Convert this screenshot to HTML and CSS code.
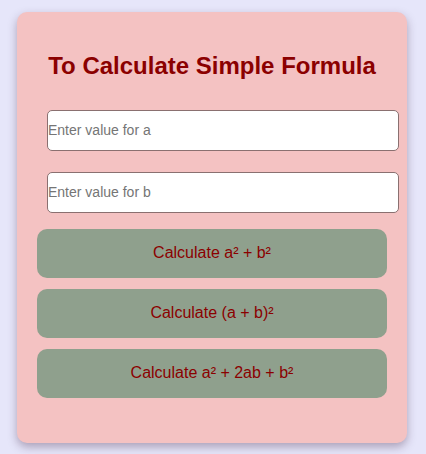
FILE: index.html
```html
<!DOCTYPE html>
<html>
<head>
<meta charset="utf-8">
<link rel="stylesheet" href="styles.css">
</head>
<body>
  <div class="card">
    <h2 class="title">To Calculate Simple Formula</h2>
    <input class="field field-a" type="text" placeholder="Enter value for a">
    <input class="field field-b" type="text" placeholder="Enter value for b">
    <button class="calc calc-first">Calculate a² + b²</button>
    <button class="calc">Calculate (a + b)²</button>
    <button class="calc">Calculate a² + 2ab + b²</button>
  </div>
</body>
</html>
```

FILE: styles.css
```css
html, body {
  margin: 0;
  padding: 0;
}
body {
  background: #e6e6fa;
  font-family: "Liberation Sans", Arial, sans-serif;
  display: flex;
  justify-content: flex-start;
  padding: 12px 0 0 17px;
  height: 454px;
  box-sizing: border-box;
}
.card {
  width: 390px;
  height: 431px;
  box-sizing: border-box;
  padding: 20px;
  background: #f4c2c2;
  border-radius: 10px;
  box-shadow: 0 4px 10px rgba(60, 30, 60, 0.35);
  display: flex;
  flex-direction: column;
}
.title {
  margin: 20px 0 30px;
  font-size: 24px;
  font-weight: bold;
  color: #8b0000;
  text-align: center;
  line-height: 27.6px;
}
.field {
  align-self: flex-start;
  margin-left: 10px;
  width: 352px;
  height: 41px;
  box-sizing: border-box;
  border: 1px solid #8a7070;
  border-radius: 5px;
  background: #fff;
  padding: 0;
  font-family: "Liberation Sans", Arial, sans-serif;
  font-size: 14px;
  color: #333;
  outline: none;
}
.field::placeholder {
  color: #757575;
}
.field-b {
  margin-top: 21px;
}
.calc {
  height: 49px;
  margin-top: 11px;
  border: none;
  border-radius: 10px;
  background: #8fa08d;
  color: #8b0000;
  font-family: "Liberation Sans", Arial, sans-serif;
  font-size: 16px;
  padding: 0;
}
.calc-first {
  margin-top: 16px;
}
```
